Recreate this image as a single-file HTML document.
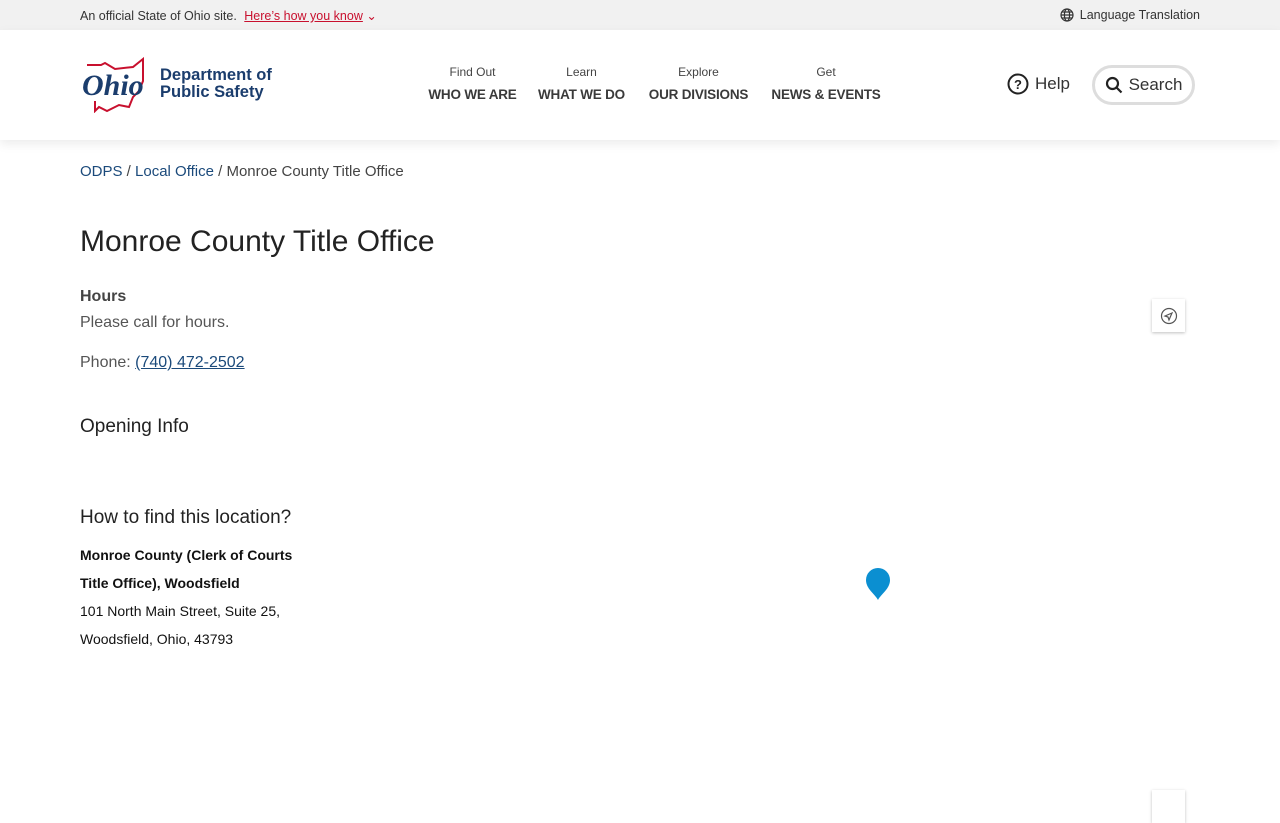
<!DOCTYPE html>
<html><head><meta charset="utf-8"><style>
*{margin:0;padding:0;box-sizing:border-box}
body{width:1280px;height:800px;overflow:hidden;background:#fff;font-family:"Liberation Sans",sans-serif;color:#333;position:relative}
.top{height:30px;background:#f1f1f1;position:relative;font-size:12.5px;color:#333}
.top .l{position:absolute;left:80px;top:8px}
.top .l a{color:#c8102e;text-decoration:underline;margin-left:4px}
.top .r{position:absolute;right:80px;top:8px;display:flex;align-items:center;gap:6px}
.hdr{height:110px;position:relative;box-shadow:0 4px 10px rgba(0,0,0,.08)}
.nav div{position:absolute;top:35px;text-align:center;white-space:nowrap}
.nav small{display:block;font-size:12px;color:#444;margin-bottom:7px}
.nav b{font-size:13.5px;color:#3a3a3a;letter-spacing:-0.2px}
.help{position:absolute;left:1007px;top:43px;font-size:17px;color:#333;display:flex;align-items:center;gap:6px}
.search{position:absolute;left:1092px;top:35px;width:103px;height:40px;border:3px solid #ddd;border-radius:20px;display:flex;align-items:center;justify-content:center;gap:6px;font-size:17px;color:#333}
.a{position:absolute;left:80px}
a{color:#1b4a7b}
</style></head><body>
<div class="top"><div class="l">An official State of Ohio site. <a>Here’s how you know</a> <span style="color:#c8102e">&#8964;</span></div>
<div class="r"><svg width="14" height="14" viewBox="0 0 14 14" fill="none" stroke="#333" stroke-width="1.2"><circle cx="7" cy="7" r="6"/><ellipse cx="7" cy="7" rx="2.6" ry="6"/><path d="M1 7h12M2 4h10M2 10h10"/></svg>Language Translation</div></div>
<div class="hdr">
<svg style="position:absolute;left:80px;top:27px" width="72" height="56" viewBox="0 0 72 56"><path d="M7 8h14l4-2 10 6 18-2 10-8v22l-4 10-6 6-4 10-10-2-12 6-8-4-4 4V44" fill="none" stroke="#c8102e" stroke-width="2"/><text x="2" y="38" font-family="Liberation Serif" font-style="italic" font-weight="bold" font-size="30" fill="#1b3d6d">Ohio</text></svg>
<div style="position:absolute;left:160px;top:37px;font-weight:bold;color:#1b3d6d;font-size:16.5px;line-height:17px">Department of<br>Public Safety</div>
<div class="nav"><div style="left:428px;width:89px"><small>Find Out</small><b>WHO WE ARE</b></div><div style="left:537px;width:89px"><small>Learn</small><b>WHAT WE DO</b></div><div style="left:646px;width:105px"><small>Explore</small><b>OUR DIVISIONS</b></div><div style="left:771px;width:110px"><small>Get</small><b>NEWS &amp; EVENTS</b></div></div>
<div class="help"><svg width="22" height="22" viewBox="0 0 22 22"><circle cx="11" cy="11" r="9.5" fill="none" stroke="#222" stroke-width="2"/><text x="11" y="16" text-anchor="middle" font-size="13" font-weight="bold" fill="#222">?</text></svg>Help</div>
<div class="search"><svg width="18" height="18" viewBox="0 0 18 18" fill="none" stroke="#222" stroke-width="2.2"><circle cx="7.5" cy="7.5" r="5.5"/><path d="M11.5 11.5l5 5"/></svg>Search</div>
</div>
<div class="a" style="top:163px;font-size:15px;color:#444"><a style="text-decoration:none">ODPS</a> / <a style="text-decoration:none">Local Office</a> / Monroe County Title Office</div>
<div class="a" style="top:225px;font-size:30px;color:#222">Monroe County Title Office</div>
<div class="a" style="top:288px;font-size:16px;font-weight:bold;color:#444">Hours</div>
<div class="a" style="top:314px;font-size:16px;color:#555">Please call for hours.</div>
<div class="a" style="top:354px;font-size:16px;color:#555">Phone: <a style="text-decoration:underline">(740) 472-2502</a></div>
<div class="a" style="top:416px;font-size:19px;color:#222">Opening Info</div>
<div class="a" style="top:507px;font-size:19px;color:#222">How to find this location?</div>
<div class="a" style="top:541px;font-size:14px;line-height:28px;color:#111"><b>Monroe County (Clerk of Courts<br>Title Office), Woodsfield</b><br>101 North Main Street, Suite 25,<br>Woodsfield, Ohio, 43793</div>
<div style="position:absolute;left:1152px;top:299px;width:33px;height:33px;background:#fff;box-shadow:0 1px 3px rgba(0,0,0,.25);display:flex;align-items:center;justify-content:center"><svg width="18" height="18" viewBox="0 0 18 18" fill="none" stroke="#555" stroke-width="1.2"><circle cx="9" cy="9" r="7.5"/><path d="M5 9l7-3-3 7-1-3z"/></svg></div>
<svg style="position:absolute;left:865px;top:567px" width="26" height="34" viewBox="0 0 26 34"><path d="M13 33C10 27 1 22 1 13a12 12 0 0124 0c0 9-9 14-12 20z" fill="#0b8fd1"/></svg>
<div style="position:absolute;left:1152px;top:790px;width:33px;height:33px;background:#fff;box-shadow:0 1px 3px rgba(0,0,0,.25)"></div>
</body></html>
